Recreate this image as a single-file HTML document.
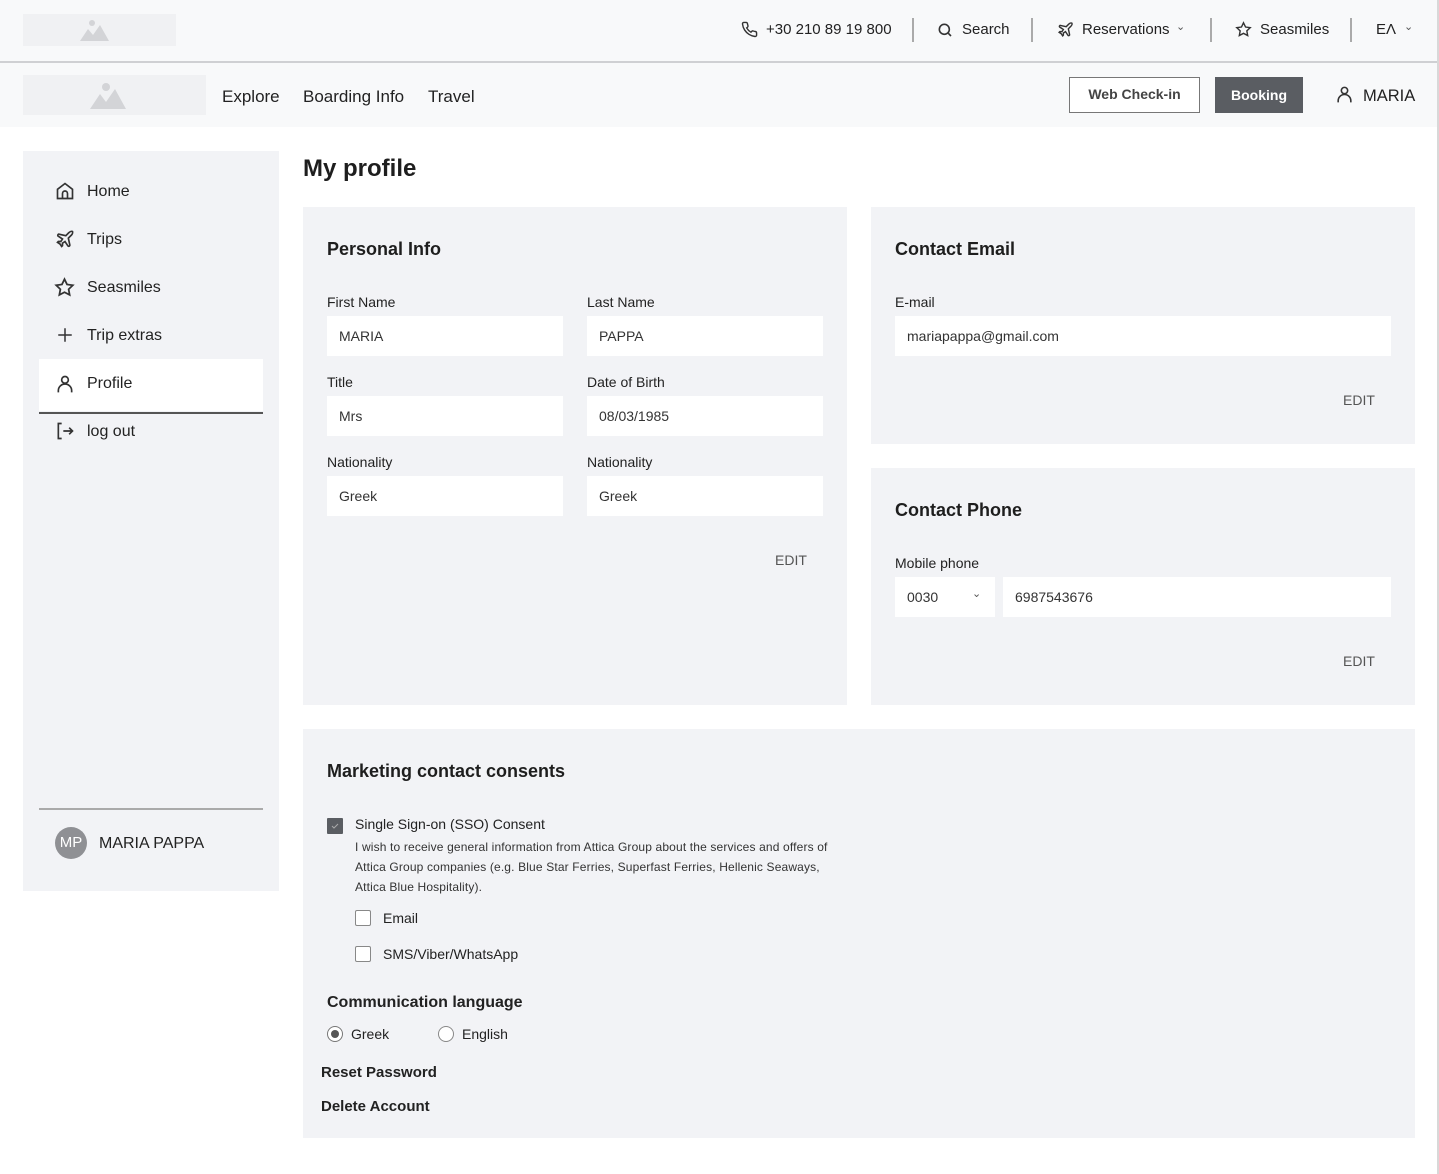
<!DOCTYPE html>
<html><head><meta charset="utf-8"><style>
*{box-sizing:border-box;margin:0;padding:0}
body{width:1439px;height:1174px;background:#fff;font-family:"Liberation Sans",Arial,sans-serif;color:#222;position:relative;overflow:hidden}
.a{position:absolute}
.card{position:absolute;background:#f2f3f6}
.h{font-weight:bold;font-size:18px;color:#1e1e1e}
.lbl{font-size:14px;color:#222}
.inp{position:absolute;background:#fff;height:40px;font-size:14px;line-height:40px;padding-left:12px;color:#333}
.edit{font-size:14px;color:#555}
.nav{font-size:16px;color:#222}
svg{position:absolute}
.cb{position:absolute;width:16px;height:16px;border:1.5px solid #888;background:#fff;border-radius:2px}
</style></head><body>
<div class="a" style="left:0;top:0;width:1439px;height:62px;background:#f8f9fa"></div>
<div class="a" style="left:0;top:61px;width:1439px;height:2px;background:#cfd0d3"></div>
<div class="a" style="left:0;top:63px;width:1439px;height:64px;background:#f8f9fa"></div>
<div class="a" style="left:1437px;top:0;width:2px;height:1174px;background:#d8d8d8"></div>
<div class="a" style="left:23px;top:14px;width:153px;height:32px;background:#f0f1f3"></div>
<svg style="left:80px;top:19px" width="40" height="24" viewBox="0 0 40 24"><circle cx="12" cy="4" r="3" fill="#d3d4d7"/><path d="M0 22 L8 10 L13 16 L20 6 L29 22Z" fill="#d3d4d7"/></svg>
<div class="a" style="left:23px;top:75px;width:183px;height:40px;background:#f0f1f3"></div>
<svg style="left:90px;top:80px" width="50" height="30" viewBox="0 0 50 30"><circle cx="16" cy="7" r="4" fill="#d3d4d7"/><path d="M0 29 L10 14 L16 22 L25 9 L36 29Z" fill="#d3d4d7"/></svg>
<svg style="left:741px;top:21px" width="17" height="17" viewBox="0 0 24 24" fill="none" stroke="#333" stroke-width="2"><path d="M22 16.9v3a2 2 0 0 1-2.2 2 19.8 19.8 0 0 1-8.6-3.1 19.5 19.5 0 0 1-6-6A19.8 19.8 0 0 1 2.1 4.2 2 2 0 0 1 4.1 2h3a2 2 0 0 1 2 1.7c.1 1 .4 1.9.7 2.8a2 2 0 0 1-.5 2.1L8 9.8a16 16 0 0 0 6 6l1.3-1.3a2 2 0 0 1 2.1-.4c.9.3 1.8.6 2.8.7a2 2 0 0 1 1.7 2z"/></svg>
<div class="a nav" style="left:766px;top:21px;font-size:15px">+30 210 89 19 800</div>
<div class="a" style="left:912px;top:18px;width:2px;height:24px;background:#aaa"></div>
<svg style="left:937px;top:22px" width="16" height="16" viewBox="0 0 24 24" fill="none" stroke="#333" stroke-width="2.4"><circle cx="11" cy="11" r="7.5"/><path d="M17 17l4 4"/></svg>
<div class="a nav" style="left:962px;top:21px;font-size:15px">Search</div>
<div class="a" style="left:1031px;top:18px;width:2px;height:24px;background:#aaa"></div>
<svg style="left:1057px;top:21px" width="17" height="17" viewBox="0 0 24 24" fill="none" stroke="#333" stroke-width="2"><path d="M17.8 19.2L16 11l3.5-3.5C21 6 21.5 4 21 3c-1-.5-3 0-4.5 1.5L13 8 4.8 6.2c-.5-.1-.9.1-1.1.5l-.3.5c-.2.5-.1 1 .3 1.3L9 12l-2 3H4l-1 1 3 2 2 3 1-1v-3l3-2 3.5 5.3c.3.4.8.5 1.3.3l.5-.2c.4-.3.6-.7.5-1.2z"/></svg>
<div class="a nav" style="left:1082px;top:21px;font-size:15px">Reservations</div>
<div class="a" style="left:1176px;top:20px;font-size:11px;color:#555">&#8964;</div>
<div class="a" style="left:1210px;top:18px;width:2px;height:24px;background:#aaa"></div>
<svg style="left:1235px;top:21px" width="17" height="17" viewBox="0 0 24 24" fill="none" stroke="#333" stroke-width="2"><path d="M12 2.5l2.9 6 6.6.9-4.8 4.6 1.2 6.5L12 17.4l-5.9 3.1 1.2-6.5L2.5 9.4l6.6-.9z"/></svg>
<div class="a nav" style="left:1260px;top:21px;font-size:15px">Seasmiles</div>
<div class="a" style="left:1350px;top:18px;width:2px;height:24px;background:#aaa"></div>
<div class="a nav" style="left:1376px;top:21px;font-size:15px">ΕΛ</div>
<div class="a" style="left:1404px;top:20px;font-size:11px;color:#555">&#8964;</div>
<div class="a nav" style="left:222px;top:87px;font-size:17px">Explore</div>
<div class="a nav" style="left:303px;top:87px;font-size:17px">Boarding Info</div>
<div class="a nav" style="left:428px;top:87px;font-size:17px">Travel</div>
<div class="a" style="left:1069px;top:77px;width:131px;height:36px;background:#fff;border:1.5px solid #777;font-size:14px;font-weight:bold;color:#444;text-align:center;line-height:33px">Web Check-in</div>
<div class="a" style="left:1215px;top:77px;width:88px;height:36px;background:#5a5d62;font-size:14px;font-weight:bold;color:#fff;text-align:center;line-height:36px">Booking</div>
<svg style="left:1335px;top:85px" width="19" height="19" viewBox="0 0 24 24" fill="none" stroke="#333" stroke-width="2"><circle cx="12" cy="7" r="4"/><path d="M4 22v-2a8 8 0 0 1 16 0v2"/></svg>
<div class="a nav" style="left:1363px;top:87px;font-size:16.5px">MARIA</div>
<div class="card" style="left:23px;top:151px;width:256px;height:740px"></div>
<svg style="left:55px;top:181px" width="20" height="20" viewBox="0 0 24 24" fill="none" stroke="#333" stroke-width="2"><path d="M3 10l9-7 9 7v11H3z"/><path d="M9 21v-6a3 3 0 0 1 6 0v6"/></svg>
<div class="a nav" style="left:87px;top:183px">Home</div>
<svg style="left:55px;top:229px" width="20" height="20" viewBox="0 0 24 24" fill="none" stroke="#333" stroke-width="2"><path d="M17.8 19.2L16 11l3.5-3.5C21 6 21.5 4 21 3c-1-.5-3 0-4.5 1.5L13 8 4.8 6.2c-.5-.1-.9.1-1.1.5l-.3.5c-.2.5-.1 1 .3 1.3L9 12l-2 3H4l-1 1 3 2 2 3 1-1v-3l3-2 3.5 5.3c.3.4.8.5 1.3.3l.5-.2c.4-.3.6-.7.5-1.2z"/></svg>
<div class="a nav" style="left:87px;top:231px">Trips</div>
<svg style="left:54px;top:277px" width="21" height="21" viewBox="0 0 24 24" fill="none" stroke="#333" stroke-width="2"><path d="M12 2.5l2.9 6 6.6.9-4.8 4.6 1.2 6.5L12 17.4l-5.9 3.1 1.2-6.5L2.5 9.4l6.6-.9z"/></svg>
<div class="a nav" style="left:87px;top:279px">Seasmiles</div>
<svg style="left:56px;top:326px" width="18" height="18" viewBox="0 0 24 24" fill="none" stroke="#333" stroke-width="2"><path d="M12 3v18M3 12h18"/></svg>
<div class="a nav" style="left:87px;top:327px">Trip extras</div>
<div class="a" style="left:39px;top:359px;width:224px;height:52px;background:#fff"></div>
<div class="a" style="left:39px;top:412px;width:224px;height:2px;background:#555"></div>
<svg style="left:55px;top:374px" width="20" height="20" viewBox="0 0 24 24" fill="none" stroke="#333" stroke-width="2"><circle cx="12" cy="7" r="4"/><path d="M4 22v-2a8 8 0 0 1 16 0v2"/></svg>
<div class="a nav" style="left:87px;top:375px">Profile</div>
<svg style="left:55px;top:421px" width="20" height="20" viewBox="0 0 24 24" fill="none" stroke="#333" stroke-width="2"><path d="M8 3H4v18h4"/><path d="M10 12h11M17 8l4 4-4 4"/></svg>
<div class="a nav" style="left:87px;top:423px">log out</div>
<div class="a" style="left:39px;top:808px;width:224px;height:2px;background:#aaa"></div>
<div class="a" style="left:55px;top:827px;width:32px;height:32px;border-radius:50%;background:#8f9094;color:#fff;font-size:15px;text-align:center;line-height:32px">MP</div>
<div class="a nav" style="left:99px;top:835px">MARIA PAPPA</div>
<div class="a" style="left:303px;top:155px;font-size:24px;font-weight:bold;color:#1e1e1e">My profile</div>
<div class="card" style="left:303px;top:207px;width:544px;height:498px"></div>
<div class="a h" style="left:327px;top:239px">Personal Info</div>
<div class="a lbl" style="left:327px;top:294px">First Name</div>
<div class="a lbl" style="left:587px;top:294px">Last Name</div>
<div class="inp" style="left:327px;top:316px;width:236px">MARIA</div>
<div class="inp" style="left:587px;top:316px;width:236px">PAPPA</div>
<div class="a lbl" style="left:327px;top:374px">Title</div>
<div class="a lbl" style="left:587px;top:374px">Date of Birth</div>
<div class="inp" style="left:327px;top:396px;width:236px">Mrs</div>
<div class="inp" style="left:587px;top:396px;width:236px">08/03/1985</div>
<div class="a lbl" style="left:327px;top:454px">Nationality</div>
<div class="a lbl" style="left:587px;top:454px">Nationality</div>
<div class="inp" style="left:327px;top:476px;width:236px">Greek</div>
<div class="inp" style="left:587px;top:476px;width:236px">Greek</div>
<div class="a edit" style="left:775px;top:552px">EDIT</div>
<div class="card" style="left:871px;top:207px;width:544px;height:237px"></div>
<div class="a h" style="left:895px;top:239px">Contact Email</div>
<div class="a lbl" style="left:895px;top:294px">E-mail</div>
<div class="inp" style="left:895px;top:316px;width:496px">mariapappa@gmail.com</div>
<div class="a edit" style="left:1343px;top:392px">EDIT</div>
<div class="card" style="left:871px;top:468px;width:544px;height:237px"></div>
<div class="a h" style="left:895px;top:500px">Contact Phone</div>
<div class="a lbl" style="left:895px;top:555px">Mobile phone</div>
<div class="inp" style="left:895px;top:577px;width:100px">0030</div>
<div class="a" style="left:972px;top:587px;font-size:11px;color:#555">&#8964;</div>
<div class="inp" style="left:1003px;top:577px;width:388px">6987543676</div>
<div class="a edit" style="left:1343px;top:653px">EDIT</div>
<div class="card" style="left:303px;top:729px;width:1112px;height:409px"></div>
<div class="a h" style="left:327px;top:761px">Marketing contact consents</div>
<div class="a" style="left:327px;top:818px;width:16px;height:16px;background:#5a5d62;border-radius:1px"></div>
<svg style="left:331px;top:822px" width="8" height="8" viewBox="0 0 8 8" fill="none" stroke="#aaa" stroke-width="1"><path d="M1 4l2 2 4-4"/></svg>
<div class="a" style="left:355px;top:816px;font-size:14px">Single Sign-on (SSO) Consent</div>
<div class="a" style="left:355px;top:837px;font-size:12px;line-height:20px;color:#333;white-space:nowrap;letter-spacing:0.15px">I wish to receive general information from Attica Group about the services and offers of<br>Attica Group companies (e.g. Blue Star Ferries, Superfast Ferries, Hellenic Seaways,<br>Attica Blue Hospitality).</div>
<div class="cb" style="left:355px;top:910px"></div>
<div class="a" style="left:383px;top:910px;font-size:14px">Email</div>
<div class="cb" style="left:355px;top:946px"></div>
<div class="a" style="left:383px;top:946px;font-size:14px">SMS/Viber/WhatsApp</div>
<div class="a" style="left:327px;top:994px;font-size:16px;font-weight:bold">Communication language</div>
<div class="a" style="left:327px;top:1026px;width:16px;height:16px;border-radius:50%;border:1.5px solid #777;background:#fff"></div>
<div class="a" style="left:331px;top:1030px;width:8px;height:8px;border-radius:50%;background:#555"></div>
<div class="a" style="left:351px;top:1026px;font-size:14px">Greek</div>
<div class="a" style="left:438px;top:1026px;width:16px;height:16px;border-radius:50%;border:1.5px solid #888;background:#fff"></div>
<div class="a" style="left:462px;top:1026px;font-size:14px">English</div>
<div class="a" style="left:321px;top:1064px;font-size:15px;font-weight:bold">Reset Password</div>
<div class="a" style="left:321px;top:1098px;font-size:15px;font-weight:bold">Delete Account</div>
</body></html>
